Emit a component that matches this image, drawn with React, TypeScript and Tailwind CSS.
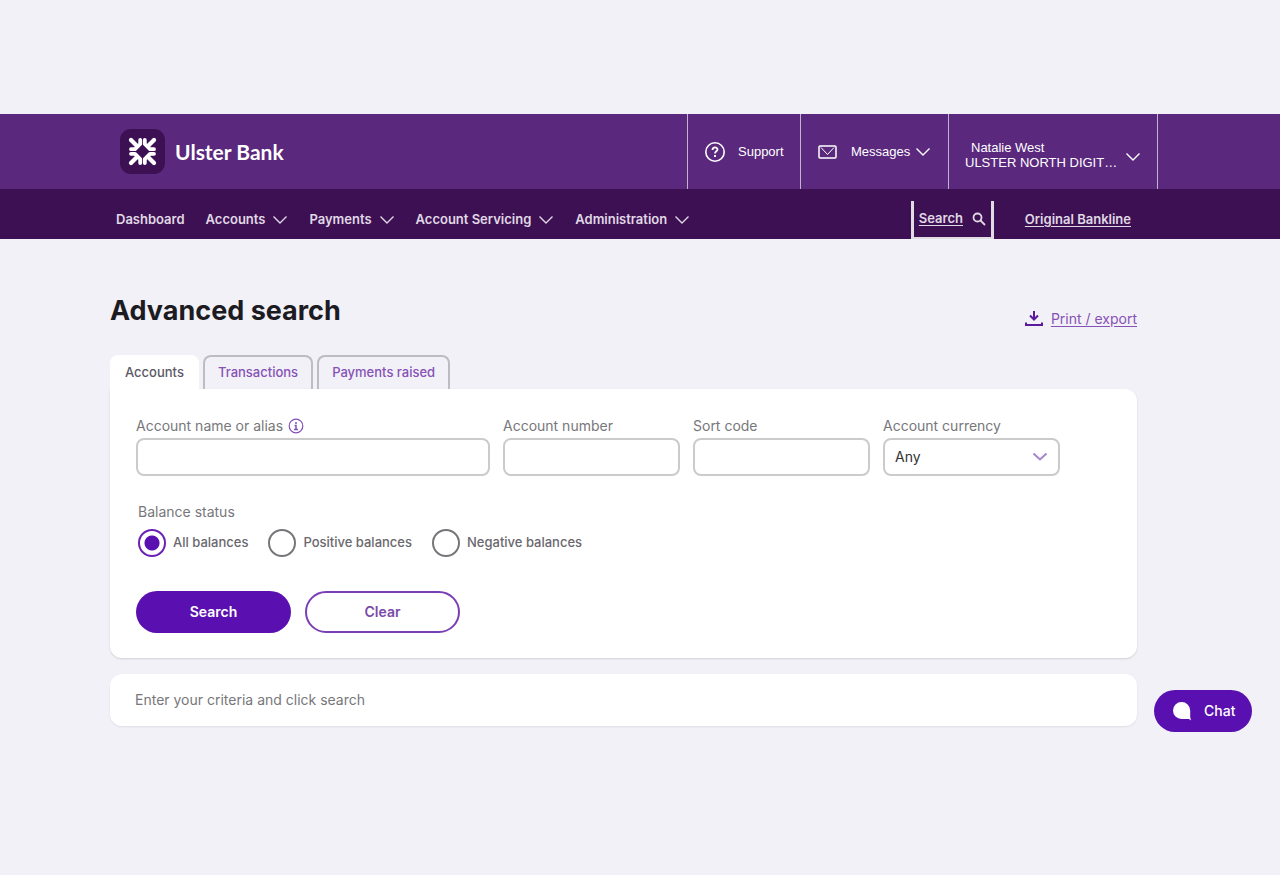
import React, { useState } from 'react'

const navItems = [
  { label: 'Dashboard', menu: false },
  { label: 'Accounts', menu: true },
  { label: 'Payments', menu: true },
  { label: 'Account Servicing', menu: true },
  { label: 'Administration', menu: true }
]

const tabs = ['Accounts', 'Transactions', 'Payments raised']

const balances = ['All balances', 'Positive balances', 'Negative balances']

const Chevron: React.FC<{ className?: string }> = ({ className }) => (
  <svg width="16" height="10" viewBox="0 0 16 10" fill="none" stroke="currentColor" strokeWidth="1.4" className={className} aria-hidden="true">
    <path d="M1.5 1.5 8 8l6.5-6.5" />
  </svg>
)

const Logo: React.FC = () => (
  <svg width="45" height="45" viewBox="0 0 45 45" aria-hidden="true">
    <rect width="45" height="45" rx="11" fill="#3c1053" />
    <g transform="translate(22.5 22.5)" fill="none" stroke="#fff" strokeWidth="3.8" strokeLinejoin="round" strokeLinecap="round">
      {[0, 90, 180, 270].map((angle) => (
        <g key={angle} transform={`rotate(${angle})`}>
          <path d="M-2.300-11.500v4l-5.200 5.200h-4" />
          <path d="M-11.500-11.500l6 6" strokeWidth="4.200" />
        </g>
      ))}
    </g>
  </svg>
)

const TopBar: React.FC = () => (
  <header className="flex h-[75px] items-stretch bg-[#5a287d] pl-[120px] pr-[122px] font-['Liberation_Sans',sans-serif] text-[13px] text-white">
    <a href="#" className="mr-auto flex items-center gap-[10px]">
      <Logo />
      <span className="font-['Lato',sans-serif] text-[21px] font-bold">Ulster Bank</span>
    </a>
    <button className="flex w-[113px] items-center gap-3 border-l border-[#c4b2d0] pl-4">
      <svg width="22" height="22" viewBox="0 0 22 22" fill="none" stroke="currentColor" strokeWidth="1.6" aria-hidden="true">
        <circle cx="11" cy="11" r="9.2" />
        <path d="M8.5 9c0-3.4 5-3.2 5-.5 0 1.700-2.500 1.900-2.500 4" strokeWidth="1.8" />
        <path d="M11 14v2" strokeWidth="2" />
      </svg>
      Support
    </button>
    <button className="flex w-[148px] items-center border-l border-[#c4b2d0] pl-[17px]">
      <svg width="19" height="14" viewBox="0 0 19 14" fill="none" stroke="currentColor" className="mr-[14px]" aria-hidden="true">
        <rect x="1" y="1" width="17" height="12" rx="1" strokeWidth="1.5" />
        <path d="M3 2.500l6.500 7 6.500-7" />
      </svg>
      Messages
      <Chevron className="ml-[5px]" />
    </button>
    <button className="flex w-[210px] items-center justify-between border-x border-[#c4b2d0] px-4 text-left leading-[15px]">
      <span className="pt-[6px]">
        <span className="block pl-[6px]">Natalie West</span>
        <span className="block">ULSTER NORTH DIGIT…</span>
      </span>
      <Chevron className="mt-[10px]" />
    </button>
  </header>
)

const NavBar: React.FC = () => (
  <nav className="flex h-[50px] items-end bg-[#3c1053] pl-[116px] pr-[149px] text-[13px] font-semibold text-[#e0d8e5]">
    <ul className="mr-auto flex h-[38px] items-center gap-[21px]">
      {navItems.map((item) => (
        <li key={item.label}>
          <a href="#" className="flex items-center gap-[7px]">
            {item.label}
            {item.menu && <Chevron />}
          </a>
        </li>
      ))}
    </ul>
    <a href="#" className="mr-[31px] flex h-[38px] w-[83px] items-center justify-between border-x-[3px] border-b-2 border-[#e0dce4] px-[5px]">
      <span className="underline underline-offset-2">Search</span>
      <svg width="14" height="14" viewBox="0 0 14 14" fill="none" stroke="currentColor" strokeWidth="1.800" aria-hidden="true">
        <circle cx="5.500" cy="5.500" r="4" />
        <path d="M8.500 8.500l4.500 4.500" />
      </svg>
    </a>
    <a href="#" className="flex h-[38px] items-center underline underline-offset-2">Original Bankline</a>
  </nav>
)

const TextField: React.FC<{ id: string; label: string; info?: boolean }> = ({ id, label, info }) => (
  <div>
    <div className="flex h-6 items-center gap-[5px] text-sm">
      <label htmlFor={id}>{label}</label>
      {info && (
        <button type="button" aria-label="More information" className="text-[#8450b8]">
          <svg width="16" height="16" viewBox="0 0 16 16" fill="none" stroke="currentColor" aria-hidden="true">
            <circle cx="8" cy="8" r="6.800" strokeWidth="1.200" />
            <path d="M8 4v2M6.500 7.500H8V11M6 11.500h4" strokeWidth="1.500" />
          </svg>
        </button>
      )}
    </div>
    <input id={id} type="text" className="block h-[38px] w-full rounded-lg border-2 border-[#cbcbcb] bg-white px-3 text-[#333] outline-none" />
  </div>
)

const App: React.FC = () => {
  const [activeTab, setActiveTab] = useState('Accounts')
  const [balance, setBalance] = useState('All balances')

  return (
    <div className="min-h-screen bg-[#f2f1f8] pt-[114px] font-['Inter',sans-serif]">
      <TopBar />
      <NavBar />

      <main className="pl-[110px] pr-[143px] pt-[54px] text-[13px] text-[#77777b]">
        <div className="flex items-end justify-between">
          <h1 className="text-[27px] font-bold leading-9 text-[#1d1b22]">Advanced search</h1>
          <a href="#" className="flex items-center gap-2 text-sm text-[#8752b5]">
            <svg width="18" height="16" viewBox="0 0 18 16" fill="none" stroke="#5a1a9c" aria-hidden="true">
              <path d="M9 0v8M5 4.500l4 4 4-4" strokeWidth="2" />
              <path d="M1 11.500V14h16v-2.500" strokeWidth="2" />
            </svg>
            <span className="underline underline-offset-2">Print / export</span>
          </a>
        </div>

        {/* Tabs */}
        <div role="tablist" className="mt-[26px] flex gap-1 font-medium">
          {tabs.map((tab) => (
            <button
              key={tab}
              role="tab"
              aria-selected={activeTab === tab}
              onClick={() => setActiveTab(tab)}
              className={`h-[34px] rounded-t-lg border-t-2 ${
                activeTab === tab ? 'border-white bg-white px-[15px] text-[#5d5865]' : 'border-x-2 border-[#bdbcc3] px-[13px] text-[#8752b5]'
              }`}
            >
              {tab}
            </button>
          ))}
        </div>

        {/* Search form */}
        <form className="rounded-b-xl rounded-tr-xl bg-white pb-[25px] pl-[26px] pr-[77px] pt-[25px] shadow-[0_1px_2px_#d0d0d6]" onSubmit={(e) => e.preventDefault()}>
          <div className="grid grid-cols-[2fr_1fr_1fr_1fr] gap-[13px]">
            <TextField id="account-name" label="Account name or alias" info />
            <TextField id="account-number" label="Account number" />
            <TextField id="sort-code" label="Sort code" />
            <div>
              <label htmlFor="currency" className="flex h-6 items-center text-sm">Account currency</label>
              <div className="relative">
                <select id="currency" className="block h-[38px] w-full appearance-none rounded-lg border-2 border-[#cbcbcb] bg-white px-[10px] text-sm text-[#333] outline-none">
                  <option>Any</option>
                </select>
                <svg width="16" height="10" viewBox="0 0 16 10" fill="none" stroke="#a583d0" strokeWidth="2" className="pointer-events-none absolute right-3 top-[14px]" aria-hidden="true">
                  <path d="M1.500 1.500 8 7.500l6.500-6" />
                </svg>
              </div>
            </div>
          </div>

          <fieldset className="mt-6">
            <legend className="h-6 pl-[2px] text-sm leading-6">Balance status</legend>
            <div className="mt-[5px] flex gap-[18px] font-medium text-[#6a686e]">
              {balances.map((name) => (
                <label key={name} className="flex items-center gap-[7px]">
                  <input
                    type="radio"
                    name="balance"
                    checked={balance === name}
                    onChange={() => setBalance(name)}
                    className="ml-[2px] size-7 shrink-0 appearance-none rounded-full border-2 border-[#77757a] checked:border-[#6a22b5] checked:bg-[radial-gradient(circle,#5a10b1_7px,#fff_8px)]"
                  />
                  {name}
                </label>
              ))}
            </div>
          </fieldset>

          <div className="mt-[34px] flex gap-[14px] text-sm font-semibold">
            <button type="submit" className="h-[42px] w-[155px] rounded-full bg-[#5a10b1] text-white">Search</button>
            <button type="reset" className="h-[42px] w-[155px] rounded-full border-2 border-[#7a3fb5] text-[#7a4aa8]">Clear</button>
          </div>
        </form>

        <p className="mt-4 rounded-xl bg-white px-[25px] py-4 text-sm leading-5 shadow-[0_1px_2px_#dedee6]">
          Enter your criteria and click search
        </p>
      </main>

      <button className="fixed bottom-[143px] right-7 flex h-[42px] w-[98px] items-center gap-3 rounded-full bg-[#5a10b1] pl-[18px] text-sm font-medium text-white">
        <svg width="20" height="20" viewBox="0 0 20 20" fill="currentColor" aria-hidden="true">
          <path d="M9.500 1a8.500 8.500 0 1 0 0 17H17l2 1.500-.8-3.500V9.500A8.500 8.500 0 0 0 9.500 1Z" />
        </svg>
        Chat
      </button>
    </div>
  )
}

export default App
